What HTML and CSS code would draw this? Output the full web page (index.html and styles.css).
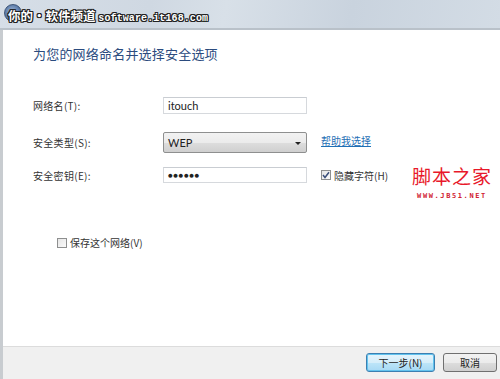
FILE: index.html
```html
<!DOCTYPE html>
<html lang="zh">
<head>
<meta charset="utf-8">
<link rel="stylesheet" href="styles.css">
</head>
<body>
<div class="window">
  <div class="titlebar">
    <span class="back"></span>
    <span class="wm">你的·软件频道 <span class="wm-en">software.it168.com</span></span>
  </div>
  <div class="body">
    <div class="content">
      <h1 class="heading">为您的网络命名并选择安全选项</h1>
      <div class="form">
        <div class="row r1">
          <span class="label">网络名(T):</span>
          <span class="input">itouch</span>
        </div>
        <div class="row r2">
          <span class="label">安全类型(S):</span>
          <span class="select">WEP<span class="caret"></span></span>
          <a class="link">帮助我选择</a>
        </div>
        <div class="row r3">
          <span class="label">安全密钥(E):</span>
          <span class="input pw">●●●●●●</span>
          <span class="check-wrap"><span class="cb checked"><svg width="8" height="8" viewBox="0 0 8 8"><path d="M1 4 L3 6.5 L7 1.2" fill="none" stroke="#3b4f7a" stroke-width="1.5"/></svg></span>隐藏字符(H)</span>
        </div>
        <div class="save"><span class="cb"></span>保存这个网络(V)</div>
      </div>
      <div class="logo">
        <div class="logo-cn">脚本之家</div>
        <div class="logo-en">WWW.JB51.NET</div>
      </div>
    </div>
    <div class="footer">
      <span class="btn primary">下一步(N)</span>
      <span class="btn">取消</span>
    </div>
  </div>
</div>
</body>
</html>
```
FILE: styles.css
```css
* { box-sizing: border-box; }
html, body { margin: 0; padding: 0; }
body {
  width: 500px; height: 379px; overflow: hidden;
  font-family: "Noto Sans CJK SC", "Liberation Sans", sans-serif;
  font-size: 10px; color: #333;
  background: #fff;
}
.window { width: 500px; height: 379px; display: flex; flex-direction: column; }
.titlebar {
  height: 30px; flex: none;
  background: linear-gradient(100deg, #d6dee7 0%, #cfd8e2 30%, #d8e0e8 45%, #c9d3de 70%, #d3dce5 100%);
  border-bottom: 2px solid #b9c1c9;
  display: flex; align-items: center; padding-left: 4px; position: relative;
}
.back {
  width: 18px; height: 18px; border-radius: 50%;
  background: radial-gradient(circle at 45% 40%, #9fb6d6 0%, #5a7aa8 55%, #2f4a78 100%);
  border: 1px solid #3f5678; margin-top: -2px;
}
.wm {
  position: absolute; left: 8px; top: 6px;
  font-family: "Noto Sans CJK SC", sans-serif; font-weight: bold;
  font-size: 12.5px; color: #fff; letter-spacing: 0;
  text-shadow: 1px 0 0 #222, -1px 0 0 #222, 0 1px 0 #222, 0 -1px 0 #222, 1px 1px 0 #222, -1px -1px 0 #222, 1px -1px 0 #222, -1px 1px 0 #222;
}
.wm-en { font-family: "Liberation Mono", monospace; font-size: 10px; letter-spacing: 0.1px; }
.body {
  flex: 1; display: flex; flex-direction: column;
  border-left: 3px solid #c8ccd0;
}
.content { flex: 1; position: relative; padding: 14px 0 0 30px; }
.heading {
  margin: 0; font-weight: normal; font-size: 13px; color: #2b4b7e;
  line-height: 20px; letter-spacing: 0.2px;
}
.form { margin-top: 33px; }
.row { display: flex; align-items: center; }
.r1 { height: 17px; }
.r2 { height: 21px; margin-top: 18px; }
.r3 { height: 16px; margin-top: 14px; }
.label { width: 130px; font-size: 10px; color: #333; letter-spacing: 0.3px; }
.input {
  width: 144px; height: 100%; border: 1px solid #d6d9dd; border-top-color: #c9cdd2;
  font-family: "Lato", "Liberation Sans", sans-serif; font-size: 11px; color: #222;
  padding-left: 4px; line-height: 15px; background: #fff;
}
.input.pw { font-size: 8px; letter-spacing: 0.5px; line-height: 14px; }
.select {
  width: 144px; height: 21px; border: 1px solid #8e8f8f; border-radius: 2px;
  background: linear-gradient(#f2f2f2 0%, #ebebeb 50%, #dddddd 51%, #cfcfcf 100%);
  font-family: "Lato", "Liberation Sans", sans-serif; font-size: 11px; color: #222;
  padding-left: 4px; line-height: 19px; position: relative;
}
.caret {
  position: absolute; right: 5px; top: 9px;
  border-left: 3px solid transparent; border-right: 3px solid transparent; border-top: 3px solid #222;
}
.link { margin-left: 14px; color: #1f6fb5; text-decoration: underline; font-size: 10px; margin-top: -4px; }
.check-wrap { margin-left: 14px; display: flex; align-items: center; font-size: 10px; color: #333; }
.cb {
  width: 10px; height: 10px; border: 1px solid #8e8f8f; margin-right: 3px;
  background: linear-gradient(135deg, #e6e6e6, #fafafa); display: inline-flex; align-items: center; justify-content: center;
}
.save { margin-top: 52px; margin-left: 24px; display: flex; align-items: center; font-size: 10px; color: #333; }
.logo { position: absolute; left: 409px; top: 134px; text-align: center; }
.logo-cn { font-size: 19px; color: #e8182a; line-height: 24px; letter-spacing: 1px; }
.logo-en { font-family: "DejaVu Sans Mono", monospace; font-size: 7px; color: #d02030; letter-spacing: 1.6px; margin-top: 4px; font-weight: bold; }
.footer {
  height: 33px; flex: none; background: #f0f0f0; border-top: 1px solid #dcdcdc;
  display: flex; justify-content: flex-end; align-items: center; gap: 8px; padding-right: 3px; padding-bottom: 1px;
}
.btn {
  width: 54px; height: 19px; border: 1px solid #707070; border-radius: 3px;
  background: linear-gradient(#f2f2f2 0%, #ebebeb 50%, #dddddd 51%, #cfcfcf 100%);
  font-size: 10px; color: #222; text-align: center; line-height: 17px;
}
.btn.primary {
  width: 69px; border-color: #3c7fb1;
  background: linear-gradient(#e5f4fc 0%, #d6eefa 50%, #bde5f8 51%, #a7d9f5 100%);
  box-shadow: inset 0 0 0 1px #62c3ee;
}
```
